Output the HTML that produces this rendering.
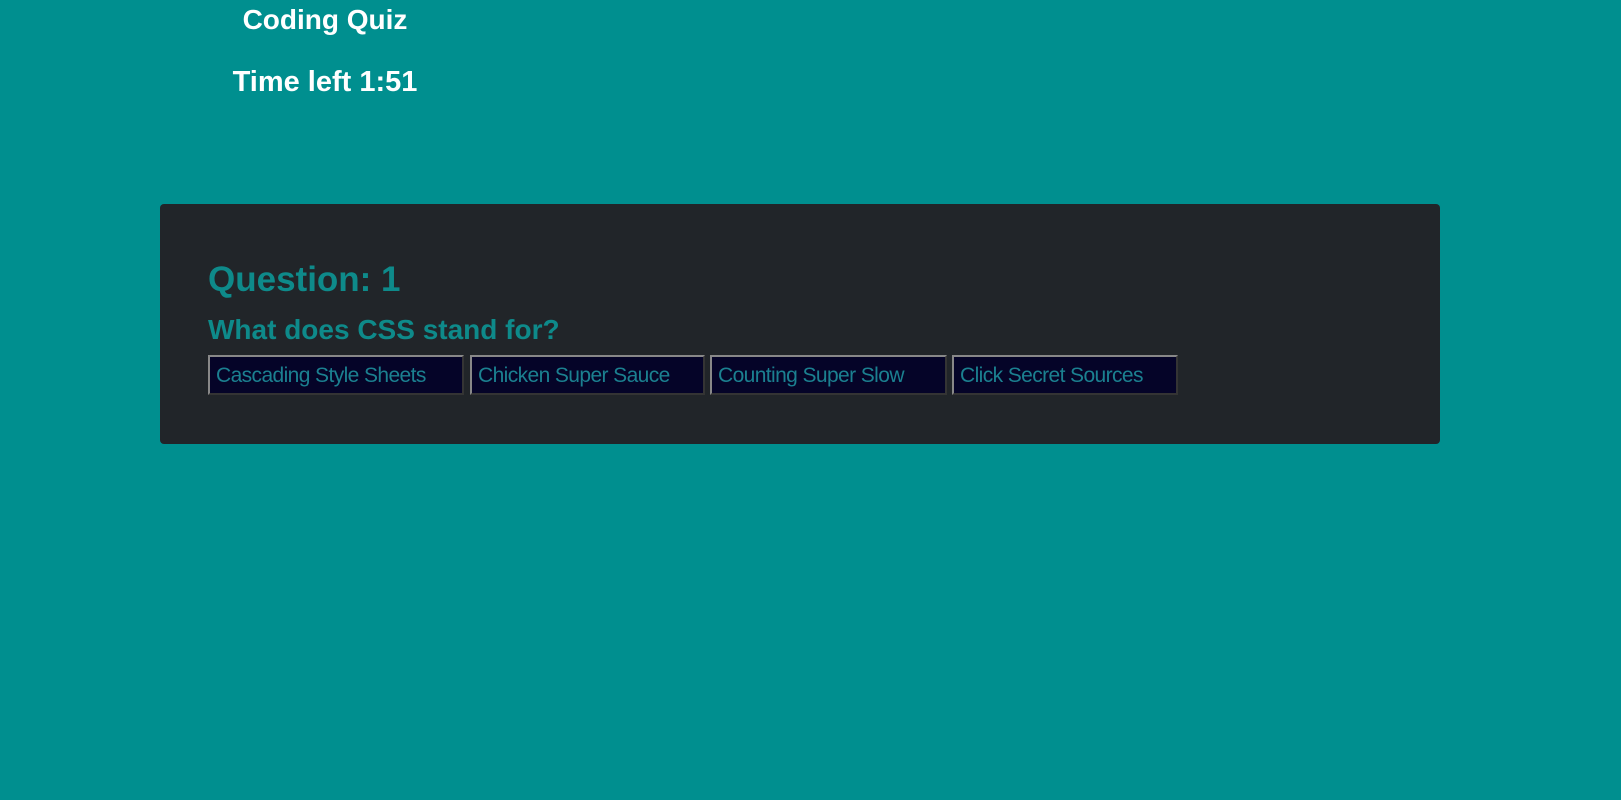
<!DOCTYPE html>
<html><head><style>
body{margin:0;width:1621px;height:800px;background:#008f8f;font-family:"Liberation Sans",sans-serif;overflow:hidden;position:relative}
.h{position:absolute;width:650px;left:0;text-align:center;color:#fff;font-weight:bold;font-size:28px}
.card{position:absolute;left:160px;top:204px;width:1280px;height:240px;background:#212529;border-radius:4px}
.q{position:absolute;left:48px;color:#0e8a8a;font-weight:bold;white-space:nowrap}
.b{position:absolute;top:151px;background:#050428;border:2px outset #888;box-sizing:border-box;height:40px;color:#1b8090;font-size:21px;line-height:38px;padding-left:6px;text-align:left;white-space:nowrap;overflow:hidden;letter-spacing:-0.6px}
</style></head><body>
<div class="h" style="top:4px">Coding Quiz</div>
<div class="h" style="top:66px;font-size:29px">Time left 1:51</div>
<div class="card">
<div class="q" style="top:56px;font-size:35px">Question: 1</div>
<div class="q" style="top:110px;font-size:28px">What does CSS stand for?</div>
<div class="b" style="left:48px;width:256px">Cascading Style Sheets</div>
<div class="b" style="left:310px;width:235px">Chicken Super Sauce</div>
<div class="b" style="left:550px;width:237px">Counting Super Slow</div>
<div class="b" style="left:792px;width:226px">Click Secret Sources</div>
</div>
</body></html>
